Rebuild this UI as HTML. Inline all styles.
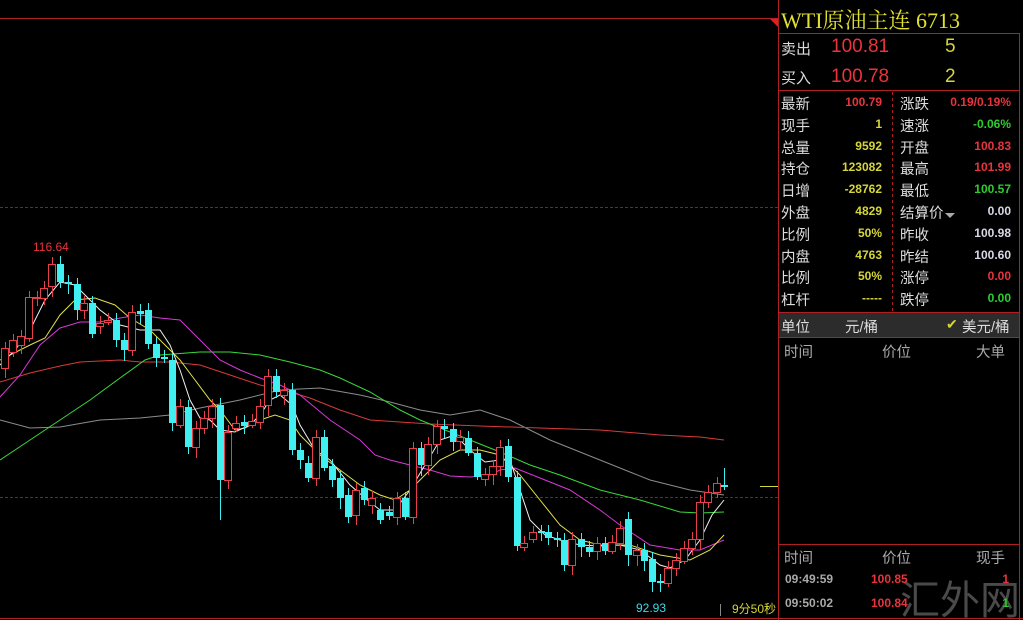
<!DOCTYPE html>
<html><head><meta charset="utf-8"><style>
html,body{margin:0;padding:0;background:#000;width:1023px;height:620px;overflow:hidden;position:relative;font-family:"Liberation Sans","Noto Sans CJK SC",sans-serif}
.a{position:absolute;white-space:nowrap}
.l{color:#ddd;font-size:14.5px}
.v{font-size:12px;font-weight:bold;text-align:right}
.y{color:#d6d63a}.r{color:#e8343c}.g{color:#2ecc2e}.w{color:#d8d8e8}
</style></head><body>
<svg class="a" style="left:0;top:0" width="1023" height="620" id="s">
<line x1="0" y1="18.5" x2="778" y2="18.5" stroke="#b02020"/>
<polygon points="770,19 778,19 778,27" fill="#e02020"/>
<line x1="0" y1="207.5" x2="778" y2="207.5" stroke="#8a1e1e" stroke-dasharray="3,2"/>
<line x1="0" y1="497.5" x2="778" y2="497.5" stroke="#8a1e1e" stroke-dasharray="3,2"/>
<line x1="760" y1="486.5" x2="778" y2="486.5" stroke="#d6d63a"/>
<line x1="0" y1="618.5" x2="1023" y2="618.5" stroke="#b02020"/>
<line x1="778.5" y1="0" x2="778.5" y2="620" stroke="#b02020"/>
<line x1="1019.5" y1="33" x2="1019.5" y2="620" stroke="#b02020"/>
<line x1="778" y1="33.5" x2="1020" y2="33.5" stroke="#b02020"/>
<line x1="778" y1="90.5" x2="1020" y2="90.5" stroke="#b02020"/>
<line x1="892.5" y1="92" x2="892.5" y2="311" stroke="#b02020" stroke-dasharray="3,3"/>
<rect x="779" y="313" width="240" height="24" fill="#2c2c2c"/>
<line x1="778" y1="312.5" x2="1020" y2="312.5" stroke="#b02020"/>
<line x1="778" y1="337.5" x2="1020" y2="337.5" stroke="#b02020"/>
<line x1="778" y1="544.5" x2="1020" y2="544.5" stroke="#b02020"/>
<line x1="720.5" y1="604" x2="720.5" y2="616" stroke="#888"/>
<g fill="none" stroke-width="1">
<polyline stroke="#8c8c8c" points="0,420 30,428 60,427 100,420 140,418 170,415 200,408 240,400 280,390 320,388 360,395 390,402 420,410 450,415 480,410 510,420 550,440 600,460 650,480 690,490 724,495"/>
<polyline stroke="#d83a3a" points="0,382 30,373 60,366 80,362 120,360 140,362 170,362 200,365 230,375 260,385 290,392 310,398 340,410 370,420 400,422 430,424 480,426 540,428 600,430 660,435 700,437 724,440"/>
<polyline stroke="#3ad83a" points="0,460 30,440 60,420 90,400 120,378 145,360 160,355 200,352 230,352 260,355 290,362 320,370 340,378 370,392 400,410 420,420 450,432 470,440 500,452 530,465 560,475 600,490 640,500 680,512 700,513 724,512"/>
<polyline stroke="#d838d8" points="0,397 20,375 40,345 60,328 80,322 100,322 120,318 140,315 160,318 180,320 200,340 220,360 240,370 260,378 280,385 300,395 330,420 360,440 375,455 390,460 410,465 430,470 450,476 470,477 490,475 500,470 515,468 540,478 570,490 600,510 620,525 650,545 680,550 700,550 724,540"/>
<polyline stroke="#e0e050" points="0,360 30,345 45,338 60,315 75,300 95,298 115,305 130,318 150,330 165,345 180,360 195,380 210,400 220,410 235,430 245,428 260,420 275,415 290,420 300,435 320,455 340,470 360,485 380,495 395,500 410,490 420,480 440,460 460,450 480,450 500,455 520,475 540,500 560,525 580,540 600,545 630,545 660,555 690,560 710,550 724,535"/>
<polyline stroke="#f0f0f0" points="0,365 15,350 30,330 45,300 60,282 75,285 85,295 100,310 120,325 140,330 160,330 170,345 180,370 190,400 200,418 210,420 220,430 235,432 250,425 260,415 270,400 280,395 292,405 300,425 315,450 330,460 350,485 365,498 380,510 395,510 410,490 425,465 440,440 455,435 470,450 485,462 500,460 510,460 520,490 530,520 545,535 560,540 580,545 600,546 620,545 640,550 660,565 670,568 685,560 700,540 712,515 724,500"/>
</g>
<g id="c"></g>
</svg>
<script>
var d=[[5,'r',348,368],[13,'r',340,352],[21,'r',336,345],[29,'r',297,338],[37,'r',297,298],[44,'r',288,298],[52,'r',264,286],[60,'c',264,282],[68,'c',282,284],[77,'c',284,310],[84,'r',303,310],[92,'c',303,334],[100,'r',323,326],[108,'r',320,322],[116,'c',320,340],[124,'c',340,350],[132,'r',312,350],[140,'c',311,314],[148,'c',310,344],[156,'c',344,358],[164,'c',357,359],[172,'c',360,423],[180,'r',406,425],[188,'c',407,447],[196,'r',428,447],[204,'r',418,428],[212,'r',406,418],[220,'c',405,480],[228,'r',432,480],[236,'r',423,428],[244,'c',422,426],[252,'r',421,425],[260,'r',406,422],[268,'r',376,405],[276,'c',376,392],[284,'r',390,395],[292,'c',390,450],[300,'c',450,460],[308,'c',463,478],[316,'r',437,478],[324,'c',437,468],[332,'c',466,480],[340,'c',478,498],[348,'c',495,517],[356,'r',490,515],[364,'c',488,500],[372,'r',498,505],[380,'c',510,520],[389,'c',512,516],[397,'r',498,517],[405,'c',498,517],[413,'r',448,517],[421,'c',448,465],[428,'r',444,465],[437,'r',426,444],[444,'c',426,429],[453,'c',429,442],[460,'r',437,441],[468,'c',438,453],[477,'c',453,477],[485,'r',474,479],[493,'r',466,474],[500,'r',447,466],[508,'c',446,477],[517,'c',477,546],[524,'r',543,547],[533,'r',532,539],[541,'c',531,533],[548,'c',532,538],[557,'c',538,540],[564,'c',540,565],[572,'r',539,565],[581,'c',539,547],[589,'c',547,552],[597,'r',543,551],[605,'c',543,551],[612,'r',542,551],[620,'r',528,543],[628,'c',519,555],[637,'r',550,555],[644,'c',550,561],[652,'c',559,582],[660,'c',581,583],[668,'r',568,583],[676,'r',560,568],[684,'r',548,561],[692,'r',539,548],[700,'r',502,539],[708,'r',492,502],[717,'r',483,492],[724,'c',485,487]];
var h='';d.forEach(function(c){var x=c[0],t=c[2],b=c[3],col=c[1]=='r'?'#e8404a':'#40f0f0';var wt=t-3-((x*7)%8),wb=b+3+((x*5)%9);if(x==220)wb=520;if(x==652)wb=592;if(x==724){wt=468;wb=490;}if(x==60)wt=256;
h+='<line x1="'+(x+.5)+'" y1="'+wt+'" x2="'+(x+.5)+'" y2="'+wb+'" stroke="'+col+'"/>';
if(c[1]=='r')h+='<rect x="'+(x-3.5)+'" y="'+(t+.5)+'" width="7" height="'+Math.max(b-t,1)+'" fill="#000" stroke="'+col+'"/>';else h+='<rect x="'+(x-3)+'" y="'+t+'" width="7" height="'+Math.max(b-t,2)+'" fill="'+col+'"/>';});
document.getElementById('c').innerHTML=h;
</script>
<div class="a r" style="left:33px;top:240px;font-size:12px">116.64</div>
<div class="a" style="left:636px;top:601px;font-size:12px;color:#40d8e8">92.93</div>
<div class="a y" style="left:732px;top:600px;font-size:12px">9分50秒</div>
<div class="a" style="left:781px;top:4px;font-size:22px;color:#e0e030;font-family:'Liberation Serif','Noto Serif CJK SC',serif">WTI原油主连 6713</div>
<div class="a l" style="left:781px;top:38px;font-size:15px">卖出</div>
<div class="a r" style="left:831px;top:36px;font-size:19px">100.81</div>
<div class="a y" style="left:945px;top:36px;font-size:19px">5</div>
<div class="a l" style="left:781px;top:67px;font-size:15px">买入</div>
<div class="a r" style="left:831px;top:66px;font-size:19px">100.78</div>
<div class="a y" style="left:945px;top:66px;font-size:19px">2</div>
<div id="t"></div>
<script>
var rows=[['最新','100.79','r','涨跌','0.19/0.19%','r'],['现手','1','y','速涨','-0.06%','g'],['总量','9592','y','开盘','100.83','r'],['持仓','123082','y','最高','101.99','r'],['日增','-28762','y','最低','100.57','g'],['外盘','4829','y','结算价','0.00','w'],['比例','50%','y','昨收','100.98','w'],['内盘','4763','y','昨结','100.60','w'],['比例','50%','y','涨停','0.00','r'],['杠杆','-----','y','跌停','0.00','g']];
var s='';rows.forEach(function(r,i){var y=93+i*21.8;s+='<div class="a l" style="left:781px;top:'+y+'px">'+r[0]+'</div><div class="a v '+r[2]+'" style="right:141px;top:'+(y+2)+'px">'+r[1]+'</div><div class="a l" style="left:900px;top:'+y+'px">'+r[3]+'</div><div class="a v '+r[5]+'" style="right:12px;top:'+(y+2)+'px">'+r[4]+'</div>';});
document.getElementById('t').innerHTML=s;
</script>
<div class="a" style="left:945px;top:213px;width:0;height:0;border-left:5px solid transparent;border-right:5px solid transparent;border-top:5px solid #aaa"></div>
<div class="a l" style="left:781px;top:316px">单位</div>
<div class="a l" style="left:845px;top:316px">元/桶</div>
<div class="a y" style="left:946px;top:316px;font-size:14px">✔</div>
<div class="a l" style="left:962px;top:316px">美元/桶</div>
<div class="a l" style="left:784px;top:341px;color:#aaa">时间</div>
<div class="a l" style="left:882px;top:341px;color:#aaa">价位</div>
<div class="a l" style="left:976px;top:341px;color:#aaa">大单</div>
<div class="a" style="left:900px;top:568px;font-size:40px;color:#4a4a4a">汇外网</div>
<div class="a l" style="left:784px;top:547px;color:#aaa">时间</div>
<div class="a l" style="left:882px;top:547px;color:#aaa">价位</div>
<div class="a l" style="left:976px;top:547px;color:#aaa">现手</div>
<div class="a v" style="left:785px;top:572px;color:#aaa">09:49:59</div>
<div class="a v r" style="left:871px;top:572px">100.85</div>
<div class="a v r" style="right:14px;top:572px">1</div>
<div class="a v" style="left:785px;top:596px;color:#aaa">09:50:02</div>
<div class="a v r" style="left:871px;top:596px">100.84</div>
<div class="a v g" style="right:14px;top:596px">1</div>
</body></html>
